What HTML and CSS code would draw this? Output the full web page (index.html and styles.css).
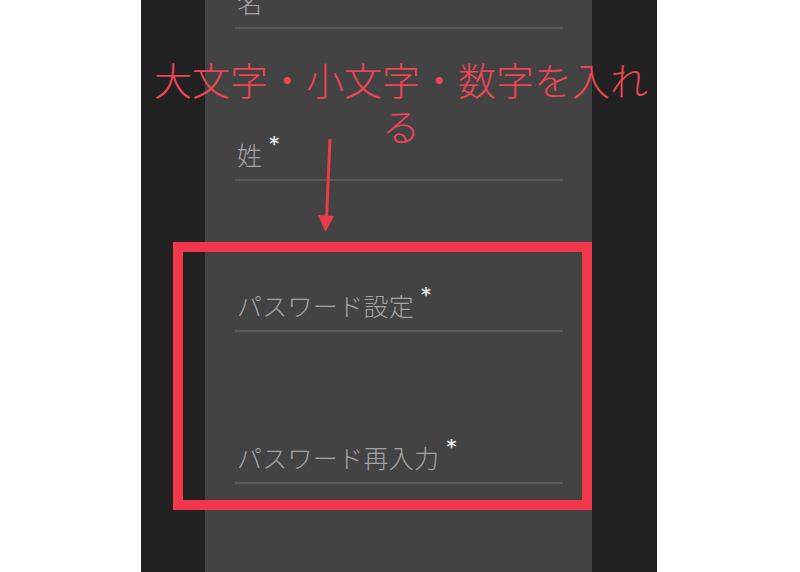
FILE: index.html
```html
<!DOCTYPE html>
<html lang="ja">
<head>
<meta charset="utf-8">
<title>会員登録</title>
<link rel="stylesheet" href="styles.css">
</head>
<body>
<div class="stage">
  <div class="screen">
    <div class="gutter"></div>
    <form class="panel">
      <div class="field"><label class="label">名</label></div>
      <div class="field"><label class="label">姓</label><span class="req">*</span></div>
      <div class="field"><label class="label">パスワード設定</label><span class="req">*</span></div>
      <div class="field"><label class="label">パスワード再入力</label><span class="req">*</span></div>
      <div class="field"></div>
    </form>
    <div class="gutter"></div>
  </div>

  <p class="note">大文字・小文字・数字を入れる</p>
  <svg class="arrow" width="30" height="100" viewBox="0 0 30 100" aria-hidden="true">
    <line x1="19" y1="0" x2="15.5" y2="80" stroke="#ea3b4c" stroke-width="3" stroke-linecap="round"/>
    <polygon points="7,76 23,77 14.5,93" fill="#ea3b4c"/>
  </svg>
  <div class="frame"></div>
</div>
</body>
</html>
```

FILE: styles.css
```css
* { box-sizing: border-box; }

html, body {
  margin: 0;
  padding: 0;
  background: #ffffff;
}

.stage {
  position: relative;
  width: 800px;
  height: 572px;
  overflow: hidden;
  font-family: "Noto Sans CJK JP", "Noto Sans", sans-serif;
}

/* phone screen: dark side gutters with the form panel between them */
.screen {
  display: flex;
  margin-left: 141px;
  width: 516px;
  height: 572px;
  background: #222222;
}

.gutter {
  width: 64px;
  flex: none;
  background: #222222;
}

.panel {
  width: 387px;
  flex: none;
  margin: 0;
  padding: 0 29px 0 30px;
  background: #434343;
  display: flex;
  flex-direction: column;
}

/* each input row: label sitting on an underline */
.field {
  height: 151.5px;
  flex: none;
  display: flex;
  align-items: flex-end;
  padding: 0 0 10px 2px;
  border-bottom: 2px solid #595959;
}

/* the list is scrolled so the first row is partly hidden */
.field:first-child {
  margin-top: -122.5px;
}

.field:last-child {
  border-bottom: none;
}

.label {
  font-size: 25px;
  font-weight: 300;
  line-height: 30px;
  color: #a3a3a3;
  letter-spacing: 0.3px;
}

.req {
  align-self: flex-end;
  font-family: "DejaVu Sans", sans-serif;
  font-size: 19px;
  line-height: 19px;
  font-weight: bold;
  color: #e2e2e2;
  margin-left: 7px;
  margin-bottom: 16px;
}

/* red annotation overlay */
.note {
  position: absolute;
  left: 141px;
  top: 56px;
  width: 520px;
  margin: 0;
  text-align: center;
  font-size: 38px;
  font-weight: 300;
  line-height: 46px;
  color: #ec4656;
}

.arrow {
  position: absolute;
  left: 311px;
  top: 139px;
}

.frame {
  position: absolute;
  left: 173px;
  top: 242px;
  width: 419px;
  height: 268px;
  border: 10px solid #f0384a;
}
```
